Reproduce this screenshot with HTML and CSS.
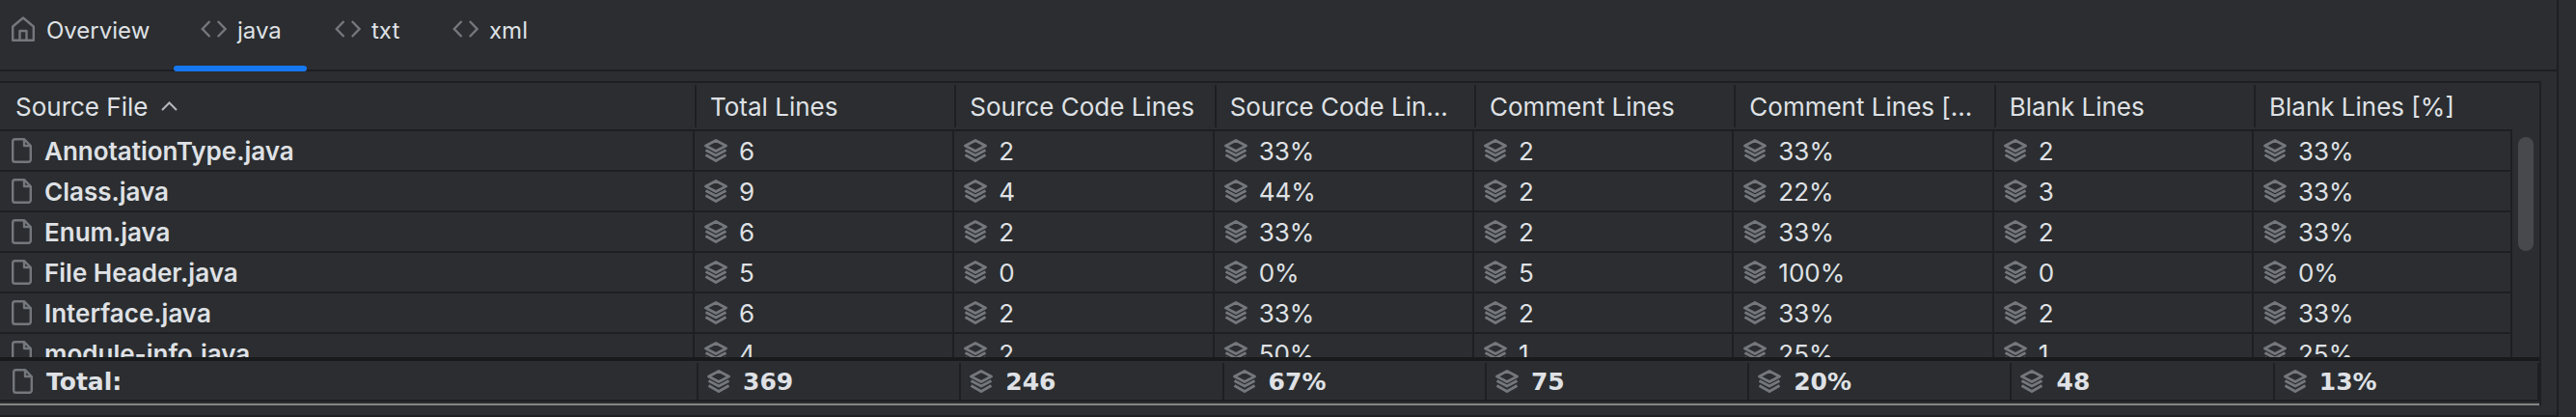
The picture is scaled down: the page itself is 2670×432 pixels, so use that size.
FILE: index.html
```html
<!DOCTYPE html>
<html lang="en">
<head>
    <meta charset="UTF-8">
    <title>Statistic</title>
    <link rel="stylesheet" href="styles.css">
</head>
<body>
    <svg class="defs" width="0" height="0">
        <symbol id="i-home" viewBox="0 0 24 26"><path d="M1.200 24.800V10.500L12 1.500l10.800 9v14.300z M8.500 24.800V15h7v9.800" fill="none" stroke="currentColor" stroke-width="2.400" stroke-linejoin="round"/></symbol>
        <symbol id="i-code" viewBox="0 0 27 18"><path d="M9.500 1L1.800 9l7.700 8 M17.800 1l7.700 8-7.700 8" fill="none" stroke="currentColor" stroke-width="2.400"/></symbol>
        <symbol id="i-file" viewBox="0 0 21 26"><path d="M3.500 1.200h9.500l6.800 6.800v14.500a2.300 2.300 0 0 1-2.300 2.300h-14a2.300 2.300 0 0 1-2.300-2.300v-19a2.300 2.300 0 0 1 2.300-2.300z M13 1.200v6.800h6.800" fill="none" stroke="currentColor" stroke-width="2.400" stroke-linejoin="round"/></symbol>
        <symbol id="i-stack" viewBox="0 0 24 24"><path d="M12 1.500l10.500 5.500-10.500 5.500-10.500-5.500z M1.500 11.500l10.500 5.500 10.500-5.500 M1.500 16.500l10.500 6 10.500-6" fill="none" stroke="currentColor" stroke-width="2.800" stroke-linejoin="round"/></symbol>
    </svg>

    <div class="panel">
        <nav class="tabs">
            <a class="tab tab-home"><svg class="ic-home"><use href="#i-home"/></svg>Overview</a>
            <a class="tab tab-java active"><svg class="ic-code"><use href="#i-code"/></svg>java</a>
            <a class="tab tab-txt"><svg class="ic-code"><use href="#i-code"/></svg>txt</a>
            <a class="tab tab-xml"><svg class="ic-code"><use href="#i-code"/></svg>xml</a>
        </nav>

        <div class="table">
            <div class="head">
                <div class="hcell first">Source File <svg class="sort" viewBox="0 0 17 10"><path d="M1 9l7.500-7.500L16 9" fill="none" stroke="currentColor" stroke-width="2"/></svg></div>
                <div class="hcell">Total Lines</div>
                <div class="hcell">Source Code Lines</div>
                <div class="hcell">Source Code Lin...</div>
                <div class="hcell">Comment Lines</div>
                <div class="hcell">Comment Lines [...</div>
                <div class="hcell">Blank Lines</div>
                <div class="hcell">Blank Lines [%]</div>
            </div>

            <div class="scroll">
                <div class="rows" id="rows"></div>
                <div class="scrollbar"><div class="thumb"></div></div>
            </div>

            <div class="foot-wrap">
                <div class="foot">
                    <div class="fcell first"><svg class="ic-file"><use href="#i-file"/></svg>Total:</div>
                    <div class="fcell"><svg class="ic-stack"><use href="#i-stack"/></svg>369</div>
                    <div class="fcell"><svg class="ic-stack"><use href="#i-stack"/></svg>246</div>
                    <div class="fcell"><svg class="ic-stack"><use href="#i-stack"/></svg>67%</div>
                    <div class="fcell"><svg class="ic-stack"><use href="#i-stack"/></svg>75</div>
                    <div class="fcell"><svg class="ic-stack"><use href="#i-stack"/></svg>20%</div>
                    <div class="fcell"><svg class="ic-stack"><use href="#i-stack"/></svg>48</div>
                    <div class="fcell last"><svg class="ic-stack"><use href="#i-stack"/></svg>13%</div>
                </div>
            </div>
        </div>
    </div>

    <script>
        // rows of the java tab
        const data = [
            ['AnnotationType.java', '6', '2', '33%', '2', '33%', '2', '33%'],
            ['Class.java', '9', '4', '44%', '2', '22%', '3', '33%'],
            ['Enum.java', '6', '2', '33%', '2', '33%', '2', '33%'],
            ['File Header.java', '5', '0', '0%', '5', '100%', '0', '0%'],
            ['Interface.java', '6', '2', '33%', '2', '33%', '2', '33%'],
            ['module-info.java', '4', '2', '50%', '1', '25%', '1', '25%']
        ];

        const rows = document.getElementById('rows');
        data.forEach(row => {
            const div = document.createElement('div');
            div.className = 'row';
            row.forEach((value, index) => {
                const icon = index === 0 ? 'file' : 'stack';
                const extra = index === 0 ? ' first' : '';
                div.innerHTML += `<div class="cell${extra}"><svg class="ic-${icon}"><use href="#i-${icon}"/></svg>${value}</div>`;
            });
            rows.appendChild(div);
        });
    </script>
</body>
</html>
```

FILE: styles.css
```css
* {
    box-sizing: border-box;
}
html, body {
    margin: 0;
    height: 100%;
    background-color: #2b2d30;
    overflow: hidden;
}
body {
    font-family: Inter, "Noto Sans", sans-serif;
    font-size: 26px;
    color: #dfe1e5;
}
.defs {
    display: none;
}
svg {
    color: #74777c;
    flex: none;
}
.panel {
    width: 2652px;
    height: 432px;
    border-right: 2px solid #1e1f22;
    border-bottom: 2px solid #1e1f22;
}
.tabs {
    display: flex;
    height: 74px;
    border-bottom: 2px solid #1e1f22;
    margin-bottom: 10px;
}
.tab {
    position: relative;
    display: flex;
    align-items: flex-start;
    gap: 11px;
    padding-top: 17px;
    height: 74px;
    line-height: 29px;
    font-size: 24px;
}
.tab-home {
    width: 180px;
    padding-left: 12px;
    gap: 12px;
}
.tab-java {
    width: 138px;
    padding-left: 28px;
}
.tab-txt {
    width: 151px;
    padding-left: 29px;
}
.active::after {
    content: "";
    position: absolute;
    left: 0;
    right: 0;
    bottom: 0;
    height: 6px;
    border-radius: 3px;
    background-color: #1677f0;
}
.ic-home {
    width: 24px;
    height: 26px;
}
.ic-code {
    width: 27px;
    height: 18px;
    margin-top: 4px;
}
.ic-file {
    width: 21px;
    height: 26px;
}
.ic-stack {
    width: 24px;
    height: 24px;
}
.table {
    width: 2634px;
    height: 336px;
    border-top: 2px solid #1e1f22;
    border-right: 2px solid #1e1f22;
    display: flex;
    flex-direction: column;
}
.head {
    display: grid;
    grid-template-columns: 720px repeat(7, 269.33px);
    height: 48px;
    flex: none;
}
.hcell {
    display: flex;
    align-items: center;
    gap: 14px;
    margin: 2px 0;
    padding-left: 14px;
    border-left: 2px solid #1e1f22;
    white-space: nowrap;
}
.hcell.first {
    border-left: none;
    padding-left: 16px;
}
.sort {
    width: 17px;
    height: 10px;
    color: #b4b8bf;
}
.scroll {
    display: flex;
    height: 236px;
    flex: none;
    overflow: hidden;
}
.rows {
    width: 2604px;
    flex: none;
    border-top: 2px solid #1e1f22;
    border-right: 2px solid #1e1f22;
}
.row {
    display: grid;
    grid-template-columns: 718px repeat(7, 269.33px);
    height: 42px;
    border-bottom: 2px solid #1e1f22;
}
.cell {
    display: flex;
    align-items: center;
    gap: 12px;
    padding-left: 10px;
    border-left: 2px solid #1e1f22;
    white-space: nowrap;
    overflow: hidden;
}
.cell.first {
    border-left: none;
    font-weight: 600;
    padding-left: 12px;
    gap: 13px;
}
.scrollbar {
    padding: 8px 0 0 6px;
}
.thumb {
    width: 16px;
    height: 118px;
    border-radius: 8px;
    background-color: #47494c;
}
.foot-wrap {
    height: 50px;
    flex: none;
    padding-bottom: 2px;
    border-bottom: 2px solid #858585;
}
.foot {
    display: grid;
    grid-template-columns: 722px repeat(6, 272.3px) 276px;
    height: 46px;
    border-top: 4px solid #191a1c;
    border-bottom: 2px solid #1e1f22;
    font-family: "DejaVu Sans", sans-serif;
    font-weight: bold;
    font-size: 25px;
}
.fcell {
    display: flex;
    align-items: center;
    gap: 13px;
    margin-top: 2px;
    padding-left: 9px;
    border-left: 2px solid #1e1f22;
    white-space: nowrap;
}
.fcell.first {
    border-left: none;
    padding-left: 13px;
    gap: 14px;
}
.fcell.last {
    border-right: 2px solid #1e1f22;
}
```
